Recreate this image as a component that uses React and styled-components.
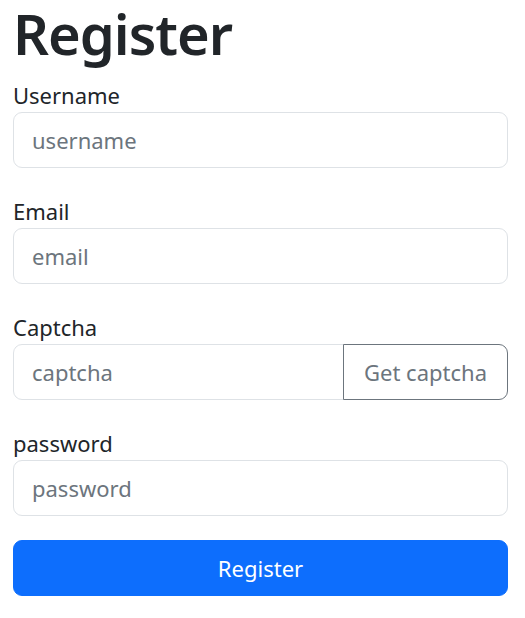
import React from "react";
import styled, { createGlobalStyle } from "styled-components";

const GlobalStyle = createGlobalStyle`
  * { box-sizing: border-box; }
  body {
    margin: 0;
    background: #fff;
    color: #212529;
    font-family: "Segoe UI", "Noto Sans", "Open Sans", sans-serif;
  }
`;

const Page = styled.form`
  padding: 0 17px 0 13px;
  display: flex;
  flex-direction: column;
`;

const Title = styled.h1`
  margin: 0 0 12px;
  font-size: 56px;
  font-weight: 600;
  letter-spacing: -1px;
  line-height: 1.2;
`;

const Field = styled.div`
  display: flex;
  flex-direction: column;
  margin-bottom: 27px;
`;

const Label = styled.label`
  font-size: 22px;
  line-height: 33px;
`;

const Group = styled.div`
  display: flex;
`;

const Input = styled.input`
  flex: ${(p) => (p.$joined ? "1" : "none")};
  width: ${(p) => (p.$joined ? "auto" : "100%")};
  min-width: 0;
  height: 56px;
  padding: 0 18px;
  font: inherit;
  font-size: 22px;
  color: #212529;
  background: #fff;
  border: 1px solid #dee2e6;
  border-radius: ${(p) => (p.$joined ? "9px 0 0 9px" : "9px")};
  outline: none;
  &::placeholder { color: #6c757d; }
`;

const SideButton = styled.button`
  width: 165px;
  height: 56px;
  margin-left: -1px;
  font: inherit;
  font-size: 22px;
  color: #6c757d;
  background: #fff;
  border: 1px solid #6c757d;
  border-radius: 0 9px 9px 0;
`;

const Submit = styled.button`
  height: 56px;
  margin-top: -3px;
  font: inherit;
  font-size: 22px;
  color: #fff;
  background: #0d6efd;
  border: 1px solid #0d6efd;
  border-radius: 9px;
`;

export default function App() {
  return (
    <>
      <GlobalStyle />
      <Page onSubmit={(e) => e.preventDefault()}>
        <Title>Register</Title>
        <Field>
          <Label>Username</Label>
          <Input placeholder="username" />
        </Field>
        <Field>
          <Label>Email</Label>
          <Input placeholder="email" />
        </Field>
        <Field>
          <Label>Captcha</Label>
          <Group>
            <Input $joined placeholder="captcha" />
            <SideButton type="button">Get captcha</SideButton>
          </Group>
        </Field>
        <Field>
          <Label>password</Label>
          <Input type="password" placeholder="password" />
        </Field>
        <Submit type="submit">Register</Submit>
      </Page>
    </>
  );
}
